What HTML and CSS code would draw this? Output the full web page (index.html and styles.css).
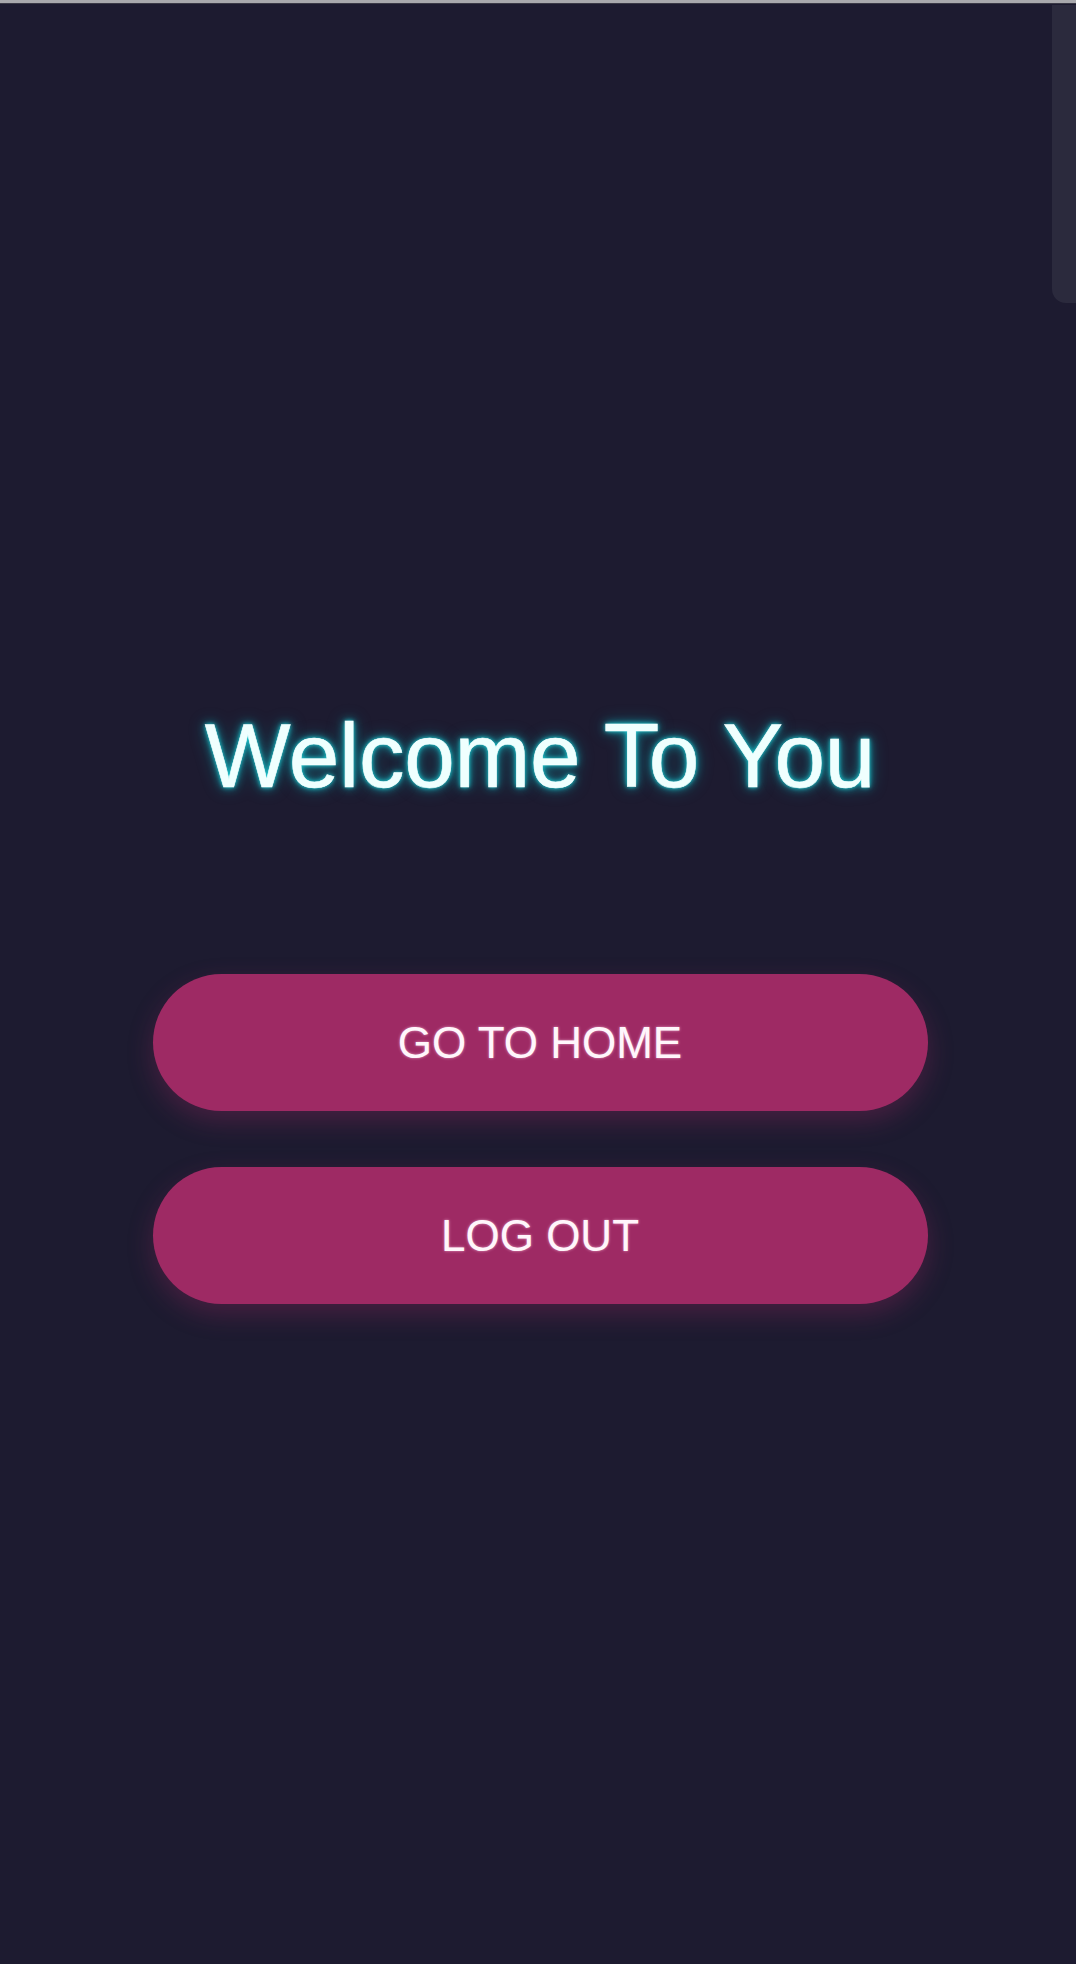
FILE: index.html
```html
<!DOCTYPE html>
<html>
<head>
<meta charset="utf-8">
<title>Welcome</title>
<link rel="stylesheet" href="styles.css">
</head>
<body>
<div class="topline"></div>
<div class="scroll-thumb"></div>
<main class="page">
  <h1 class="title">Welcome To You</h1>
  <div class="actions">
    <button class="pill">GO TO HOME</button>
    <button class="pill">LOG OUT</button>
  </div>
</main>
</body>
</html>
```
FILE: styles.css
```css
html, body {
  margin: 0;
  padding: 0;
  background: #1d1b30;
}
body {
  min-height: 1964px;
  font-family: "Liberation Sans", Arial, sans-serif;
  position: relative;
  overflow: hidden;
}
.topline {
  height: 3px;
  background: #a9a9ad;
  border-bottom: 1px solid #3a3946;
}
.scroll-thumb {
  position: absolute;
  top: 5px;
  right: 0;
  width: 24px;
  height: 298px;
  background: #2b2a3d;
  border-radius: 0 0 0 14px;
}
.page {
  display: flex;
  flex-direction: column;
  align-items: center;
  padding-top: 702px;
  padding-left: 4px;
}
.title {
  margin: 0;
  font-size: 91px;
  line-height: 100px;
  font-weight: 400;
  letter-spacing: -0.3px;
  color: #effffe;
  -webkit-text-stroke: 0.6px #f4ffff;
  text-shadow: 0 0 4px #22d8dc, 0 0 10px rgba(20, 210, 220, 0.75), 0 0 18px rgba(0, 190, 200, 0.4);
}
.actions {
  margin-top: 168px;
  display: flex;
  flex-direction: column;
  gap: 56px;
}
.pill {
  width: 775px;
  height: 137px;
  border: none;
  border-radius: 69px;
  background: #9e2a64;
  color: #fff6fb;
  font-family: "Liberation Sans", Arial, sans-serif;
  font-size: 44px;
  padding: 0;
  box-shadow: 0 10px 26px rgba(160, 40, 100, 0.32);
  text-shadow: 0 0 3px rgba(255, 200, 230, 0.7);
}
```
